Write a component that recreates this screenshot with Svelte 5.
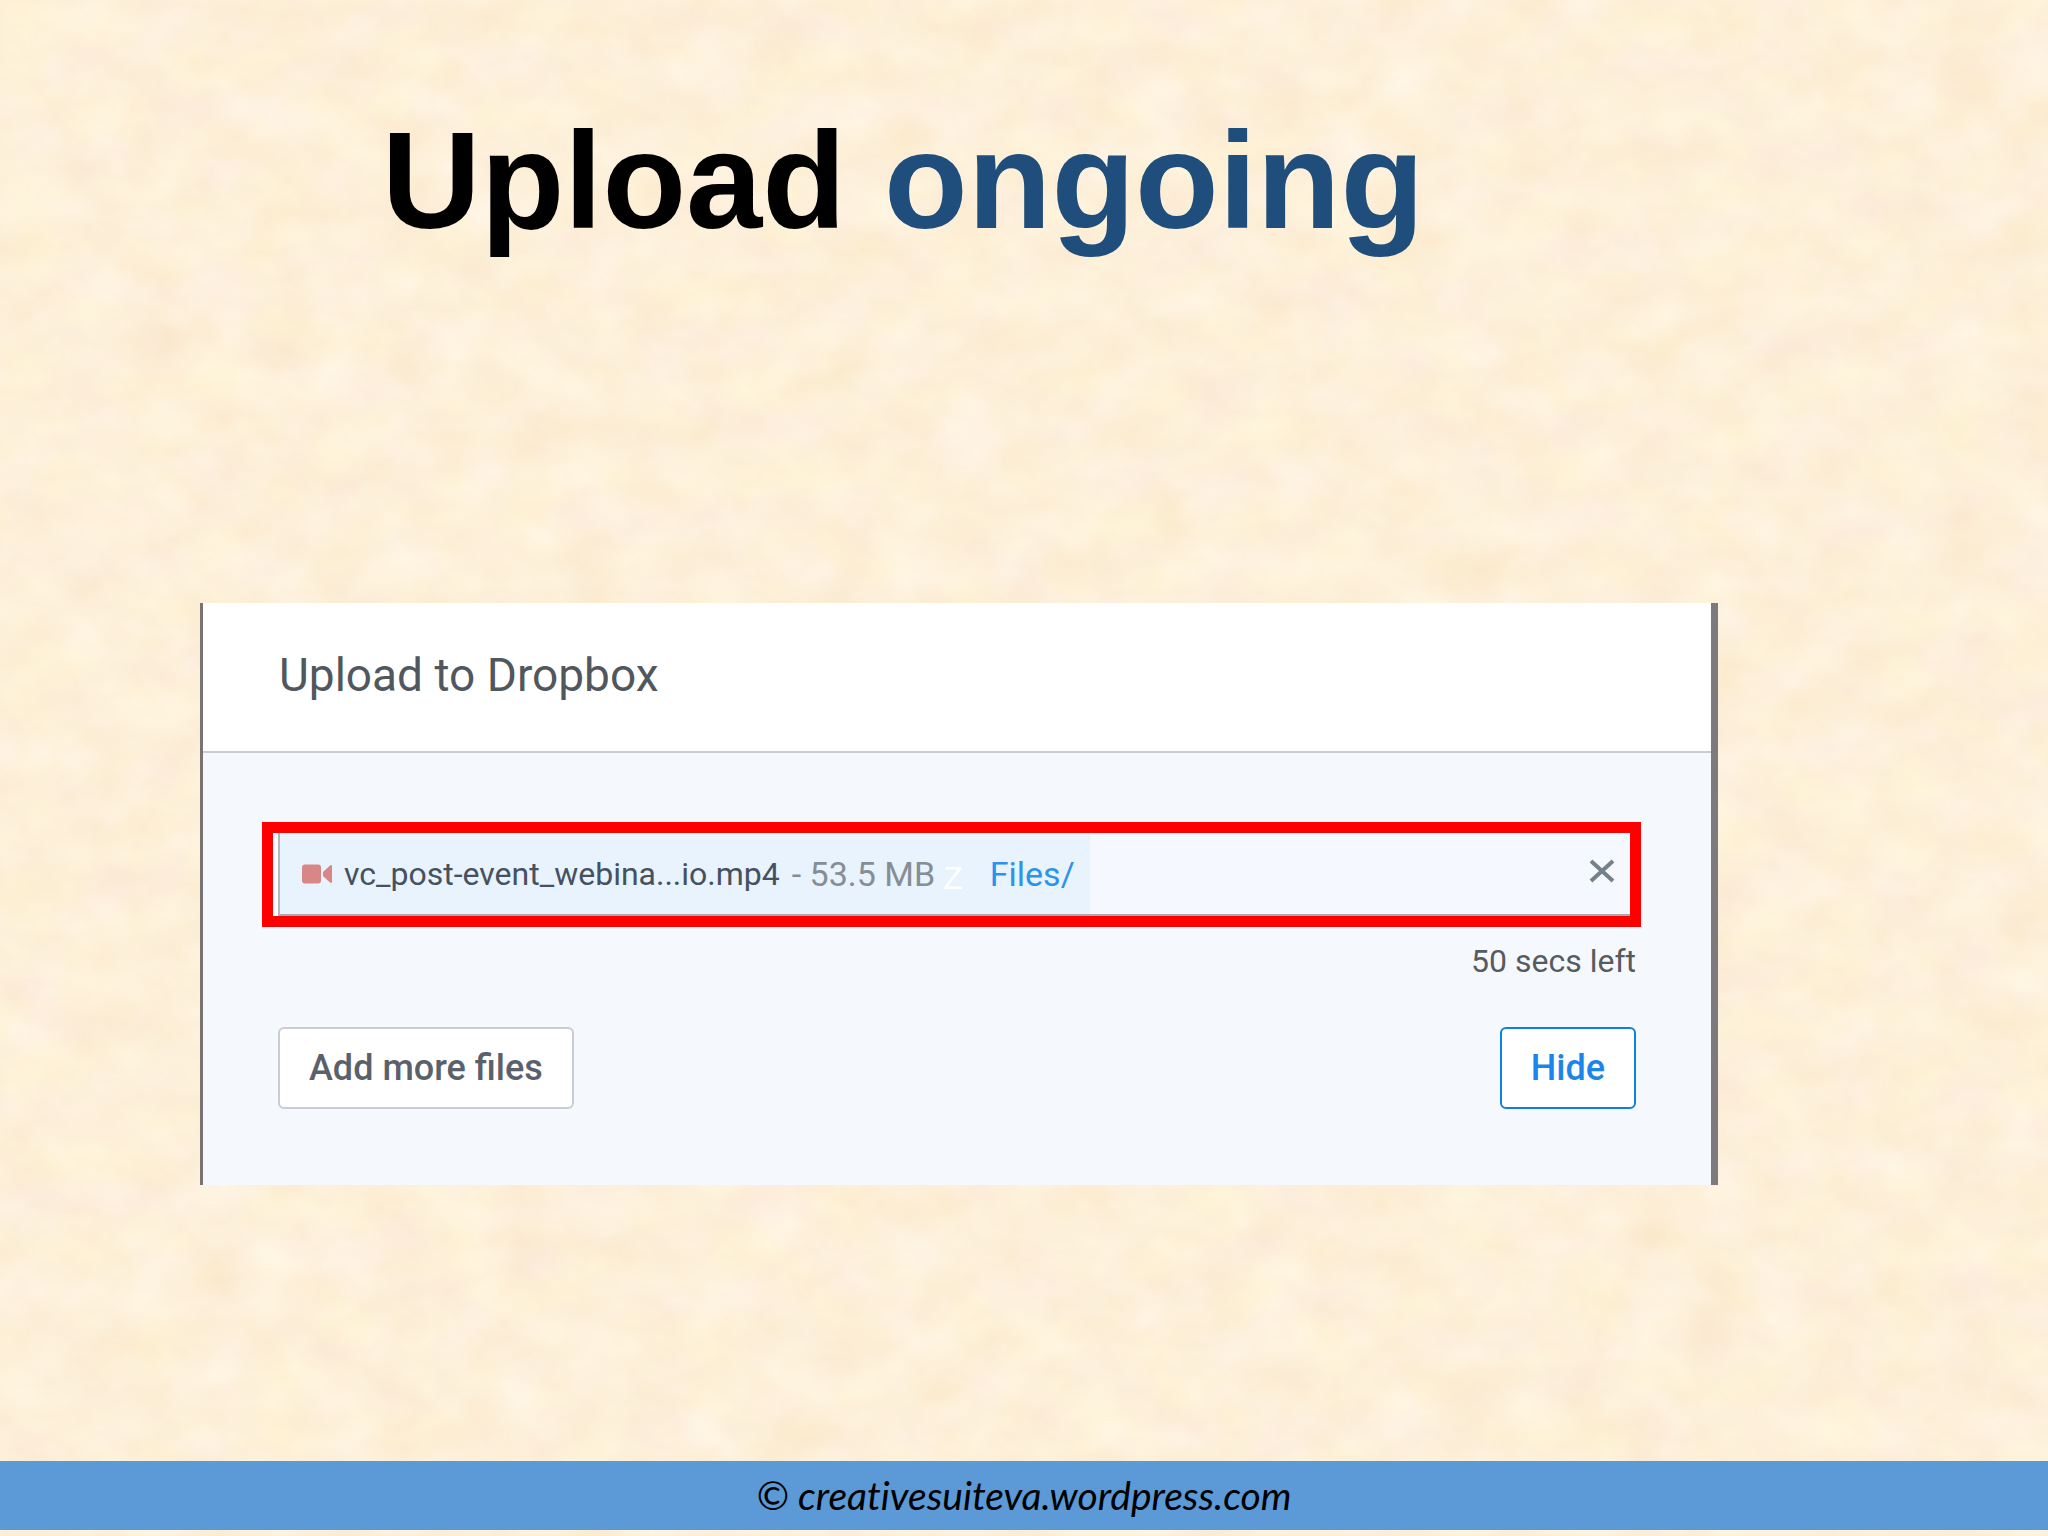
<script>
  const file = { name: 'vc_post-event_webina...io.mp4', size: '53.5 MB', folder: 'Files/', progress: 60 };
</script>

<div class="slide">
  <svg class="paper" aria-hidden="true" width="100%" height="100%">
    <filter id="grain" x="0" y="0" width="100%" height="100%" color-interpolation-filters="sRGB">
      <feTurbulence type="fractalNoise" baseFrequency="0.016 0.022" numOctaves="4" seed="8" />
      <feColorMatrix
        values="0.02 0.01 0 0 0.977
                0.04 0.045 0 0 0.898
                0.06 0.04 0.07 0 0.767
                0 0 0 0 1"
      />
    </filter>
    <rect width="100%" height="100%" filter="url(#grain)" />
  </svg>

  <h1>Upload <span>ongoing</span></h1>

  <main class="dialog">
    <header><h2>Upload to Dropbox</h2></header>
    <div class="body">
      <div class="highlight">
        <div class="row">
          <div class="done" style:width="{file.progress}%"></div>
          <svg class="video" viewBox="0 0 30 20" aria-hidden="true">
            <rect x="0" y="0.5" width="19" height="19" rx="3" />
            <path d="M21 8 L28 1.5 Q30 0.5 30 2 V18 Q30 19.5 28 18.5 L21 12 Z" />
          </svg>
          <span class="name">{file.name}</span>
          <span class="size">- {file.size}</span>
          <span class="mark">Z</span>
          <a href="#files">{file.folder}</a>
          <button class="cancel" aria-label="Cancel upload">
            <svg viewBox="0 0 26 24" aria-hidden="true"><path d="M2 2 L24 22 M24 2 L2 22" /></svg>
          </button>
        </div>
      </div>
      <p>50 secs left</p>
      <div class="actions">
        <button class="add">Add more files</button>
        <button class="hide">Hide</button>
      </div>
    </div>
  </main>

  <footer>© creativesuiteva.wordpress.com</footer>
</div>

<style>
  :global(body) {
    margin: 0;
    background: #fdf0d9;
  }
  .slide {
    position: relative;
    display: flex;
    flex-direction: column;
    box-sizing: border-box;
    min-height: 100vh;
    padding-bottom: 6px;
    font-family: Roboto, 'Liberation Sans', sans-serif;
    isolation: isolate;
  }
  .paper {
    position: absolute;
    inset: 0;
    z-index: -1;
  }
  h1 {
    margin: 101px 242px 0 0;
    font: bold 137px/160px 'Liberation Sans', Arial, sans-serif;
    text-align: center;
    color: #000;
  }
  h1 span {
    color: #1f4e7c;
  }
  .dialog {
    margin: 342px 330px 0 200px;
    border-left: 3px solid #777471;
    border-right: 7px solid #7d7a7f;
    background: #f5f8fd;
  }
  header {
    padding: 42px 76px 46px;
    border-bottom: 2px solid #c9ccd0;
    background: #fff;
  }
  h2 {
    margin: 0;
    font-size: 46px;
    line-height: 60px;
    font-weight: 400;
    color: #50575e;
  }
  .body {
    padding: 69px 75px 76px;
  }
  .highlight {
    margin: 0 -5px 0 -16px;
    padding-left: 5px;
    border: 11px solid #f00;
    background: #fff;
  }
  .row {
    position: relative;
    display: flex;
    align-items: center;
    height: 81px;
    padding: 0 15px 0 22px;
    border-left: 2px solid #b4b9bb;
    border-bottom: 2px solid #a9abae;
    background: #f5f9ff;
    font-size: 32px;
    line-height: 40px;
    isolation: isolate;
  }
  .done {
    position: absolute;
    inset: 0 auto 0 0;
    z-index: -1;
    background: #e8f3fe;
  }
  .video {
    width: 30px;
    height: 20px;
    margin-right: 12px;
    fill: #d98686;
  }
  .name {
    color: #465160;
  }
  .size {
    margin-left: 12px;
    font-size: 34px;
    color: #868e95;
  }
  .mark {
    margin: 8px 27px 0 8px;
    font-family: 'Liberation Sans', sans-serif;
    color: #fff;
  }
  a {
    font-size: 34px;
    color: #2c93ec;
    text-decoration: none;
  }
  .cancel {
    display: flex;
    margin-left: auto;
    padding: 0 0 6px;
    border: 0;
    background: none;
  }
  .cancel svg {
    width: 26px;
    height: 24px;
    fill: none;
    stroke: #75818a;
    stroke-width: 4;
  }
  p {
    margin: 14px 0 0;
    font-size: 32px;
    line-height: 40px;
    text-align: right;
    color: #565b61;
  }
  .actions {
    display: flex;
    justify-content: space-between;
    margin-top: 46px;
  }
  .actions button {
    padding: 19px 29px;
    border: 2px solid #c9ccd1;
    border-radius: 6px;
    background: #fff;
    font: 500 36px/40px Roboto, sans-serif;
    color: #5a616b;
  }
  .actions .hide {
    border-color: #0f7fe0;
    color: #1a86ec;
  }
  footer {
    margin-top: auto;
    background: #5b9ad6;
    font: italic 39px/69px Lato, sans-serif;
    font-variant-ligatures: none;
    text-align: center;
    color: #000;
  }
</style>
